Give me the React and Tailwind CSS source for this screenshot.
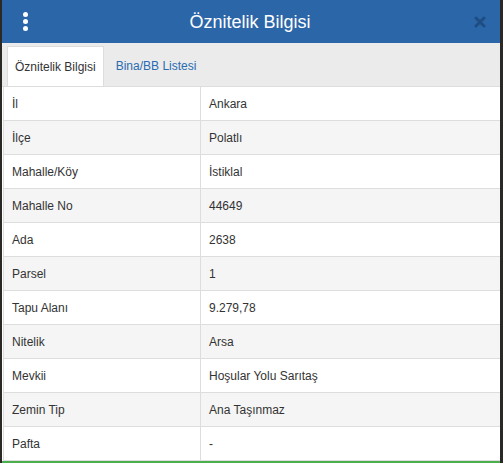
import React from 'react';

const rows = [
  ['İl', 'Ankara'],
  ['İlçe', 'Polatlı'],
  ['Mahalle/Köy', 'İstiklal'],
  ['Mahalle No', '44649'],
  ['Ada', '2638'],
  ['Parsel', '1'],
  ['Tapu Alanı', '9.279,78'],
  ['Nitelik', 'Arsa'],
  ['Mevkii', 'Hoşular Yolu Sarıtaş'],
  ['Zemin Tip', 'Ana Taşınmaz'],
  ['Pafta', '-'],
];

const App = () => {
  return (
    <div className="w-[503px] h-[463px] bg-[#2b2925] overflow-hidden font-['Liberation_Sans',Arial,sans-serif]">
      <div className="ml-[2px] w-[498px] h-[463px] flex flex-col bg-white">
        {/* Header */}
        <div className="h-[43px] shrink-0 bg-[#2b66a9] flex items-center relative">
          <div className="w-[46px] flex flex-col items-center gap-[2.5px] pl-[1px]">
            <span className="w-[4.5px] h-[4.5px] rounded-full bg-white" />
            <span className="w-[4.5px] h-[4.5px] rounded-full bg-white" />
            <span className="w-[4.5px] h-[4.5px] rounded-full bg-white" />
          </div>
          <h1 className="flex-1 text-center text-white text-[18px] leading-none pr-[2px]">Öznitelik Bilgisi</h1>
          <div className="w-[46px] flex justify-center pl-[6px]">
            <svg width="12" height="12" viewBox="0 0 12 12">
              <path d="M2 2 L10 10 M10 2 L2 10" stroke="#1d4d82" strokeWidth="3" strokeLinecap="round" />
            </svg>
          </div>
        </div>

        {/* Tabs */}
        <div className="h-[44px] shrink-0 bg-[#ebebeb] flex items-end px-[5px] border-b border-[#dddddd]">
          <div className="h-[40px] px-[7px] bg-white border border-b-0 border-[#dddddd] flex items-center text-[12px] text-[#333]">
            Öznitelik Bilgisi
          </div>
          <div className="h-[40px] px-[12px] flex items-center text-[12px] text-[#2a6bb1]">
            Bina/BB Listesi
          </div>
        </div>

        {/* Table */}
        <div className="flex-1 ml-[1px] border-l border-[#dddddd]">
          {rows.map(([k, v], i) => (
            <div
              key={k}
              className={`flex h-[34px] border-b border-[#dddddd] text-[12px] text-[#333] ${i % 2 === 1 ? 'bg-[#f5f5f5]' : 'bg-white'}`}
            >
              <div className="w-[197px] shrink-0 px-[8px] flex items-center border-r border-[#dddddd]">{k}</div>
              <div className="flex-1 px-[8px] flex items-center">{v}</div>
            </div>
          ))}
        </div>
        <div className="h-[2px] shrink-0 bg-[#4cae4c]" />
      </div>
    </div>
  );
};

export default App;
